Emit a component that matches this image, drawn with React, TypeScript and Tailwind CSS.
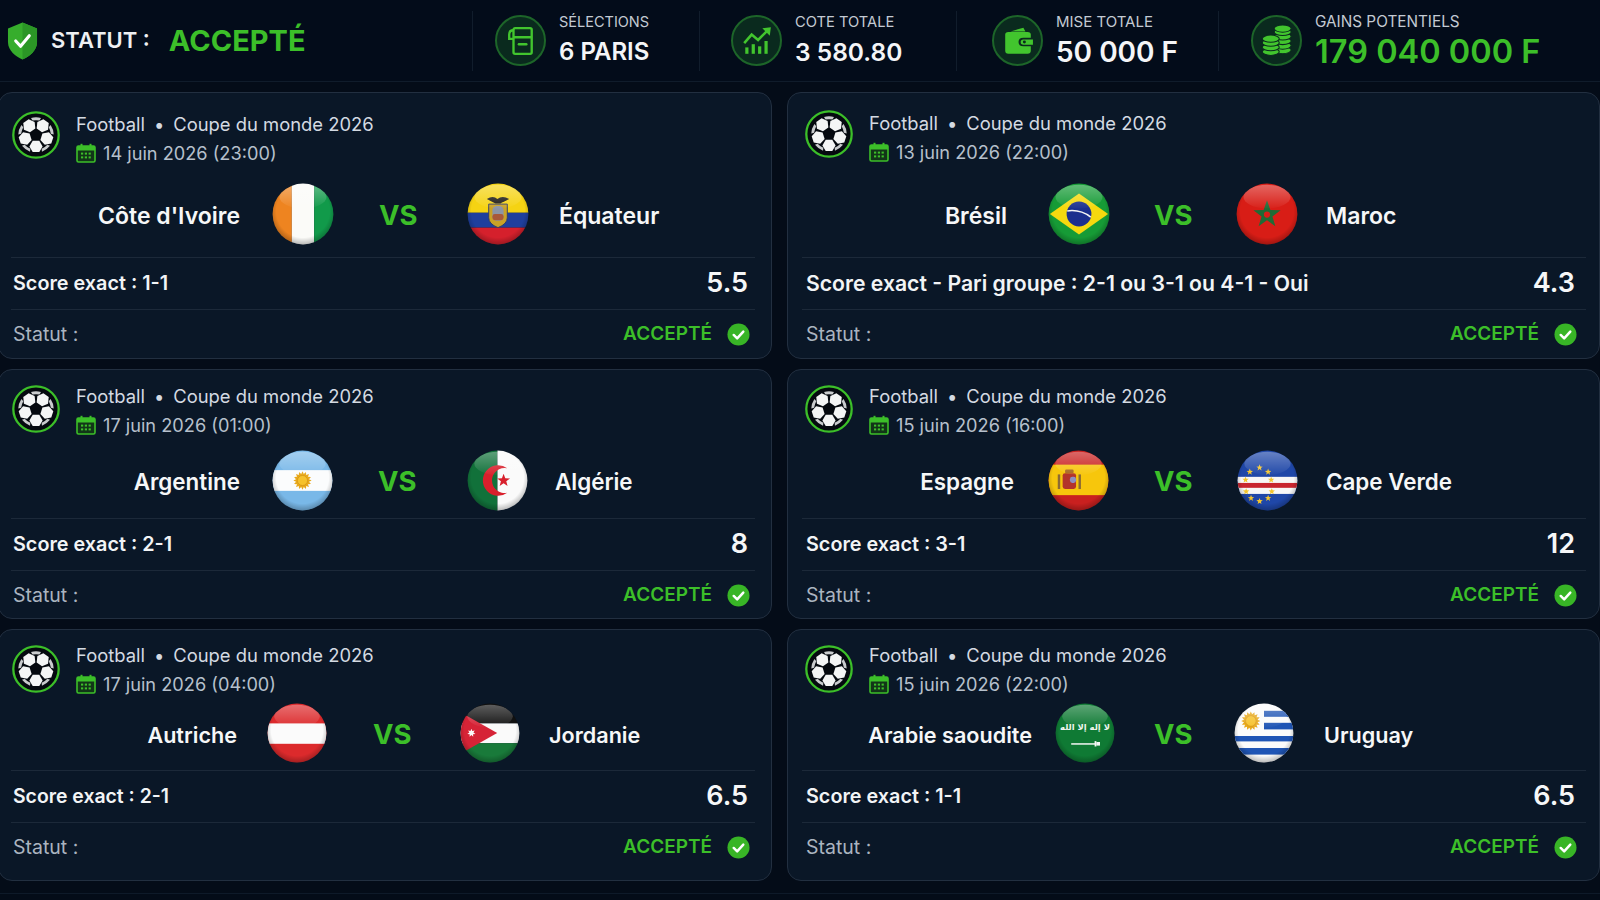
import type { ReactNode } from 'react';

type FlagCode = 'ci' | 'ec' | 'br' | 'ma' | 'ar' | 'dz' | 'es' | 'cv' | 'at' | 'jo' | 'sa' | 'uy';

interface Match {
    date: string;
    home: string;
    away: string;
    homeFlag: FlagCode;
    awayFlag: FlagCode;
    pick: string;
    pickSize: string;
    odd: string;
    nameW: string;
    gapA: string;
    gapB: string;
    gapC: string;
    gapD: string;
}

function starPoints(cx: number, cy: number, r: number, n = 5, inner = 0.42) {
    const pts: string[] = [];
    for (let i = 0; i < n * 2; i++) {
        const rad = i % 2 === 0 ? r : r * inner;
        const a = (Math.PI * i) / n - Math.PI / 2;
        pts.push(`${(cx + rad * Math.cos(a)).toFixed(2)},${(cy + rad * Math.sin(a)).toFixed(2)}`);
    }
    return pts.join(' ');
}

function hexPoints(cx: number, cy: number, r: number) {
    const pts: string[] = [];
    for (let i = 0; i < 6; i++) {
        const a = (Math.PI * i) / 3;
        pts.push(`${(cx + r * Math.cos(a)).toFixed(2)},${(cy + r * Math.sin(a)).toFixed(2)}`);
    }
    return pts.join(' ');
}

function Sun({ cx, cy, r }: { cx: number; cy: number; r: number }) {
    return (
        <g>
            <polygon points={starPoints(cx, cy, r, 16, 0.72)} fill="#e8a91c" />
            <circle cx={cx} cy={cy} r={r * 0.55} fill="#f6c22c" stroke="#c98412" strokeWidth="0.8" />
        </g>
    );
}

const capeVerdeStars: [number, number][] = [
    [21, 36], [37, 29], [51, 36], [14, 49], [56, 49],
    [15, 68], [57, 68], [23, 79], [37, 84], [51, 79],
];

const flagArt: Record<FlagCode, ReactNode> = {
    ci: (
        <>
            <rect width="32" height="100" fill="#ee8420" />
            <rect x="32" width="36" height="100" fill="#fbfbf8" />
            <rect x="68" width="32" height="100" fill="#119a4a" />
        </>
    ),
    ec: (
        <>
            <rect width="100" height="48" fill="#f5d313" />
            <rect y="48" width="100" height="24" fill="#1f3f9d" />
            <rect y="72" width="100" height="28" fill="#d5202c" />
            <path d="M32 26 Q42 19 49 26 Q57 19 68 26 Q58 31 54 33 L46 33 Q41 31 32 26 Z" fill="#1c1a16" />
            <path d="M35 34 H65 V56 Q65 66 50 72 Q35 66 35 56 Z" fill="#c9a227" stroke="#2c3a6b" strokeWidth="1.5" />
            <rect x="41" y="37" width="18" height="24" rx="7" fill="#8c95a6" />
            <rect x="41" y="50" width="18" height="10" rx="4" fill="#a8583a" />
        </>
    ),
    br: (
        <>
            <rect width="100" height="100" fill="#169b36" />
            <polygon points="50,17 97,50 50,83 3,50" fill="#f5d90f" />
            <circle cx="50" cy="50" r="20" fill="#1b2f8e" />
            <path d="M31 45 Q52 42 69 55" fill="none" stroke="#f3f3f3" strokeWidth="2.5" />
        </>
    ),
    ma: (
        <>
            <rect width="100" height="100" fill="#d81d16" />
            <polygon points={starPoints(50, 51, 23, 5, 0.4)} fill="#1f6b35" />
            <circle cx="50" cy="51" r="5" fill="#d81d16" />
        </>
    ),
    ar: (
        <>
            <rect width="100" height="100" fill="#79b8e8" />
            <rect y="33" width="100" height="34" fill="#fbfcfd" />
            <Sun cx={50} cy={50} r={15} />
        </>
    ),
    dz: (
        <>
            <rect width="50" height="100" fill="#11713a" />
            <rect x="50" width="50" height="100" fill="#fafafa" />
            <path d="M66 30 A25 25 0 1 0 66 70 A20.5 20.5 0 1 1 66 30 Z" fill="#d8202c" />
            <polygon points={starPoints(60, 50, 11, 5, 0.42)} fill="#d8202c" />
        </>
    ),
    es: (
        <>
            <rect width="100" height="100" fill="#c9201f" />
            <rect y="24" width="100" height="50" fill="#f7c60c" />
            <rect x="24" y="38" width="22" height="26" rx="4" fill="#b3342a" />
            <rect x="28" y="32" width="14" height="6" rx="2" fill="#a8671f" />
            <rect x="36" y="44" width="10" height="10" rx="4" fill="#8d8fc0" />
            <rect x="16" y="40" width="4" height="24" fill="#8c6a34" />
            <rect x="50" y="40" width="4" height="24" fill="#8c6a34" />
        </>
    ),
    cv: (
        <>
            <rect width="100" height="100" fill="#1f47a8" />
            <rect y="44" width="100" height="28" fill="#f7f7f7" />
            <rect y="54" width="100" height="8" fill="#c8252f" />
            {capeVerdeStars.map(([x, y]) => (
                <polygon key={`${x}-${y}`} points={starPoints(x, y, 5.5)} fill="#f4c52d" />
            ))}
        </>
    ),
    at: (
        <>
            <rect width="100" height="100" fill="#dc2a2c" />
            <rect y="34" width="100" height="34" fill="#fbfbfb" />
        </>
    ),
    jo: (
        <>
            <rect width="100" height="34" fill="#111111" />
            <rect y="34" width="100" height="33" fill="#fafafa" />
            <rect y="67" width="100" height="33" fill="#197a3a" />
            <polygon points="0,15 62,50 0,85" fill="#d62336" />
            <polygon points={starPoints(19, 50, 7, 7, 0.5)} fill="#fafafa" />
        </>
    ),
    sa: (
        <>
            <rect width="100" height="100" fill="#0f7a34" />
            <text x="50" y="45" textAnchor="middle" direction="rtl" fontFamily="DejaVu Sans, sans-serif" fontWeight="700" fontSize="14" fill="#eef5ee">لا إله إلا الله</text>
            <rect x="27" y="67" width="42" height="2.5" fill="#f4f7f4" />
            <rect x="66" y="63.5" width="3" height="9" fill="#f4f7f4" />
            <rect x="69" y="65" width="6" height="6" fill="#f4f7f4" />
        </>
    ),
    uy: (
        <>
            <rect width="100" height="100" fill="#fbfbfb" />
            <rect x="50" y="13" width="50" height="10" fill="#1f55b5" />
            <rect x="50" y="33" width="50" height="11" fill="#1f55b5" />
            <rect y="55" width="100" height="9" fill="#1f55b5" />
            <rect y="75" width="100" height="11" fill="#1f55b5" />
            <Sun cx={28} cy={30} r={16} />
        </>
    ),
};

function Flag({ code, size }: { code: FlagCode; size: string }) {
    return (
        <svg viewBox="0 0 100 100" className={`${size} shrink-0`}>
            <defs>
                <clipPath id={`clip-${code}`}>
                    <circle cx="50" cy="50" r="49" />
                </clipPath>
                <linearGradient id={`gloss-${code}`} x1="0" y1="0" x2="0" y2="1">
                    <stop offset="0" stopColor="#ffffff" stopOpacity="0.32" />
                    <stop offset="1" stopColor="#ffffff" stopOpacity="0.02" />
                </linearGradient>
                <radialGradient id={`shade-${code}`} cx="0.5" cy="0.45" r="0.55">
                    <stop offset="0.78" stopColor="#000000" stopOpacity="0" />
                    <stop offset="1" stopColor="#000000" stopOpacity="0.28" />
                </radialGradient>
            </defs>
            <g clipPath={`url(#clip-${code})`}>
                {flagArt[code]}
                <rect width="100" height="100" fill={`url(#shade-${code})`} />
                <ellipse cx="50" cy="22" rx="38" ry="19" fill={`url(#gloss-${code})`} />
            </g>
        </svg>
    );
}

function SoccerBall() {
    const angles = [36, 108, 180, 252, 324];
    return (
        <svg viewBox="0 0 48 48" className="h-[48px] w-[48px] shrink-0">
            <circle cx="24" cy="24" r="22.7" fill="#05090f" stroke="#3cbf29" strokeWidth="2.3" />
            {angles.map(a => (
                <g key={a} transform={`rotate(${a} 24 24)`}>
                    <polygon points={hexPoints(24, 12.6, 6.6)} fill="#f4f5f5" />
                </g>
            ))}
            {angles.map(a => (
                <g key={`edge-${a}`} transform={`rotate(${a + 36} 24 24)`}>
                    <path d="M19 7 Q24 5.6 29 7 L27.5 9.5 Q24 8.8 20.5 9.5 Z" fill="#c9cbcd" />
                </g>
            ))}
            <polygon points={starPoints(24, 24, 5.4, 5, 0.81)} fill="#05090f" />
        </svg>
    );
}

function CalendarIcon() {
    return (
        <svg viewBox="0 0 20 20" className="h-[20px] w-[20px] shrink-0">
            <rect x="1" y="3" width="18" height="16" rx="1.5" fill="#123518" stroke="#3cbf29" strokeWidth="1.6" />
            <rect x="1" y="3" width="18" height="4.5" fill="#3cbf29" />
            <rect x="4.5" y="0.8" width="2" height="4" fill="#3cbf29" />
            <rect x="13.5" y="0.8" width="2" height="4" fill="#3cbf29" />
            {[5, 8.8, 12.6].map(x => (
                <g key={x}>
                    <rect x={x} y="9.6" width="2.2" height="2" fill="#3cbf29" />
                    <rect x={x} y="13.4" width="2.2" height="2" fill="#3cbf29" />
                </g>
            ))}
        </svg>
    );
}

function CheckBadge() {
    return (
        <svg viewBox="0 0 24 24" className="h-[23px] w-[23px] shrink-0">
            <circle cx="12" cy="12" r="11.5" fill="#38b526" />
            <path d="M7 12.5 L10.6 16 L17 9" fill="none" stroke="#ffffff" strokeWidth="2.6" strokeLinecap="round" strokeLinejoin="round" />
        </svg>
    );
}

function ShieldIcon() {
    return (
        <svg viewBox="0 0 32 38" className="h-[38px] w-[31px] shrink-0">
            <path d="M16 0 L31 6 V20 C31 29 23 35 16 38 C9 35 1 29 1 20 V6 Z" fill="#36ad2c" />
            <path d="M16 0 L31 6 V20 C31 29 23 35 16 38 Z" fill="#2b9626" />
            <path d="M9 19 L14 24.5 L23 13.5" fill="none" stroke="#ffffff" strokeWidth="3.2" strokeLinecap="round" strokeLinejoin="round" />
        </svg>
    );
}

function StatCircle({ children }: { children: ReactNode }) {
    return (
        <div className="flex h-[51px] w-[51px] shrink-0 items-center justify-center rounded-full border-2 border-[#1d6529] bg-[#0a2a1e]">
            {children}
        </div>
    );
}

const statIcons: ReactNode[] = [
    <svg key="ticket" viewBox="0 0 28 28" className="h-[30px] w-[30px]" fill="none" stroke="#42c52e" strokeWidth="2.2">
        <rect x="7" y="2" width="17" height="24" rx="1.5" />
        <path d="M7 4 Q3 4 3 8 V12 H7 M7 10.5 H24" />
        <path d="M12 17 H19" strokeLinecap="round" />
    </svg>,
    <svg key="chart" viewBox="0 0 30 30" className="h-[32px] w-[32px]" fill="#42c52e">
        <rect x="4" y="21" width="3" height="6" />
        <rect x="10" y="18" width="3" height="9" />
        <rect x="16" y="20" width="3" height="7" />
        <rect x="22" y="15" width="3" height="12" />
        <path d="M3 17 L10 9 L16 14 L25 5" fill="none" stroke="#42c52e" strokeWidth="2.4" />
        <polygon points="20,3 28,2 27,10" />
    </svg>,
    <svg key="wallet" viewBox="0 0 30 30" className="h-[32px] w-[32px]" fill="#42c52e">
        <path d="M8 6 L20 2.5 L22 6 Z" />
        <path d="M3 9 Q3 6.5 6 6.5 H24 Q27 6.5 27 9 V12 H20 Q15.5 12 15.5 16 Q15.5 20 20 20 H27 V24 Q27 27 24 27 H6 Q3 27 3 24 Z" />
        <path d="M20 13.5 H29 V18.5 H20 Q17.5 18.5 17.5 16 Q17.5 13.5 20 13.5 Z" />
        <circle cx="21" cy="16" r="1.4" fill="#0a2a1e" />
    </svg>,
    <svg key="coins" viewBox="0 0 30 30" className="h-[34px] w-[34px]" fill="#42c52e" stroke="#0a2a1e" strokeWidth="0.9">
        {[23, 19, 15, 11, 7, 4].map(y => (
            <ellipse key={y} cx="20" cy={y} rx="7.5" ry="3.2" />
        ))}
        {[24.5, 20.5, 16.5, 13].map(y => (
            <ellipse key={y} cx="9.5" cy={y} rx="7.5" ry="3.2" />
        ))}
    </svg>,
];

const stats = [
    { label: 'SÉLECTIONS', value: '6 PARIS', box: 'w-[227px] pl-[22px]', labelSize: 'text-[14.5px]', valueStyle: 'text-[24px] text-[#f4f5f7]' },
    { label: 'COTE TOTALE', value: '3 580.80', box: 'w-[257px] pl-[31px]', labelSize: 'text-[14.7px]', valueStyle: 'text-[24.5px] text-[#f4f5f7]' },
    { label: 'MISE TOTALE', value: '50 000 F', box: 'w-[262px] pl-[35px]', labelSize: 'text-[15px]', valueStyle: 'text-[28px] text-[#f4f5f7]' },
    { label: 'GAINS POTENTIELS', value: '179 040 000 F', box: 'w-[382px] pl-[32px]', labelSize: 'text-[15.3px]', valueStyle: 'text-[32.5px] text-[#3cbf29]' },
];

const rows = [
    {
        card: 'h-[267px]',
        top: 'h-[82px]',
        ptLeft: 'pt-[18px]',
        ptRight: 'pt-[17px]',
        textShift: 'mt-0',
        teams: 'h-[82px] pb-[5px]',
        teamSize: 'text-[23px]',
        shift: 'mt-[5px]',
        flag: 'h-[62px] w-[62px]',
        matches: [
            { date: '14 juin 2026 (23:00)', home: "Côte d'Ivoire", away: 'Équateur', homeFlag: 'ci', awayFlag: 'ec', pick: 'Score exact : 1-1', pickSize: 'text-[19.8px]', odd: '5.5', nameW: 'w-[229px]', gapA: 'ml-[32px]', gapB: 'ml-[45px]', gapC: 'ml-[50px]', gapD: 'ml-[30px]' },
            { date: '13 juin 2026 (22:00)', home: 'Brésil', away: 'Maroc', homeFlag: 'br', awayFlag: 'ma', pick: 'Score exact - Pari groupe : 2-1 ou 3-1 ou 4-1 - Oui', pickSize: 'text-[21.2px]', odd: '4.3', nameW: 'w-[205px]', gapA: 'ml-[41px]', gapB: 'ml-[44px]', gapC: 'ml-[44px]', gapD: 'ml-[28px]' },
        ] as Match[],
    },
    {
        card: 'h-[250px]',
        top: 'h-[72px]',
        ptLeft: 'pt-[15px]',
        ptRight: 'pt-[15px]',
        textShift: '-mt-[2px]',
        teams: 'h-[76px]',
        teamSize: 'text-[22.4px]',
        shift: 'mt-[4px]',
        flag: 'h-[61px] w-[61px]',
        matches: [
            { date: '17 juin 2026 (01:00)', home: 'Argentine', away: 'Algérie', homeFlag: 'ar', awayFlag: 'dz', pick: 'Score exact : 2-1', pickSize: 'text-[19.8px]', odd: '8', nameW: 'w-[229px]', gapA: 'ml-[32px]', gapB: 'ml-[45px]', gapC: 'ml-[51px]', gapD: 'ml-[27px]' },
            { date: '15 juin 2026 (16:00)', home: 'Espagne', away: 'Cape Verde', homeFlag: 'es', awayFlag: 'cv', pick: 'Score exact : 3-1', pickSize: 'text-[19.8px]', odd: '12', nameW: 'w-[212px]', gapA: 'ml-[34px]', gapB: 'ml-[45px]', gapC: 'ml-[45px]', gapD: 'ml-[28px]' },
        ] as Match[],
    },
    {
        card: 'h-[252px]',
        top: 'h-[66px]',
        ptLeft: 'pt-[15px]',
        ptRight: 'pt-[15px]',
        textShift: '-mt-[3px]',
        teams: 'h-[74px]',
        teamSize: 'text-[21.6px]',
        shift: 'mt-[4px]',
        flag: 'h-[60px] w-[60px]',
        matches: [
            { date: '17 juin 2026 (04:00)', home: 'Autriche', away: 'Jordanie', homeFlag: 'at', awayFlag: 'jo', pick: 'Score exact : 2-1', pickSize: 'text-[19.4px]', odd: '6.5', nameW: 'w-[226px]', gapA: 'ml-[30px]', gapB: 'ml-[46px]', gapC: 'ml-[49px]', gapD: 'ml-[29px]' },
            { date: '15 juin 2026 (22:00)', home: 'Arabie saoudite', away: 'Uruguay', homeFlag: 'sa', awayFlag: 'uy', pick: 'Score exact : 1-1', pickSize: 'text-[19.8px]', odd: '6.5', nameW: 'w-[230px]', gapA: 'ml-[23px]', gapB: 'ml-[39px]', gapC: 'ml-[42px]', gapD: 'ml-[30px]' },
        ] as Match[],
    },
];

function MatchCard({ match, row, side }: { match: Match; row: (typeof rows)[number]; side: 'left' | 'right' }) {
    const left = side === 'left';
    return (
        <div className={`${row.card} rounded-[14px] border border-[#222f40] bg-[#0a1727] ${left ? '-ml-[2px] pl-[12px] pr-[16px]' : 'pl-[14px] pr-[13px]'}`}>
            {/* Competition + date */}
            <div className={`${row.top} flex ${left ? `${row.ptLeft} gap-[16px] pl-[1px]` : `${row.ptRight} gap-[16px] pl-[3px]`}`}>
                <SoccerBall />
                <div className={`${row.textShift} text-[#d4dae2]`}>
                    <div className="text-[18.4px] leading-[26px]">
                        Football<span className="mx-[9px]">•</span>Coupe du monde 2026
                    </div>
                    <div className="mt-[3px] flex items-center gap-[7px] text-[18.2px] leading-[26px] text-[#b6c0cc]">
                        <CalendarIcon />
                        {match.date}
                    </div>
                </div>
            </div>

            {/* Teams */}
            <div className={`${row.teams} ${row.teamSize} flex items-center font-semibold text-[#f6f7f8]`}>
                <div className={`${match.nameW} ${row.shift} shrink-0 text-right`}>{match.home}</div>
                <div className={match.gapA}>
                    <Flag code={match.homeFlag} size={row.flag} />
                </div>
                <div className={`${match.gapB} ${row.shift} w-[38px] shrink-0 text-center text-[27.5px] font-bold text-[#3cbf29]`}>VS</div>
                <div className={match.gapC}>
                    <Flag code={match.awayFlag} size={row.flag} />
                </div>
                <div className={`${match.gapD} ${row.shift}`}>{match.away}</div>
            </div>

            {/* Pick */}
            <div className={`flex h-[52px] items-center justify-between border-t border-[#1c2939] ${left ? 'pl-[2px] pr-[7px]' : 'pl-[4px] pr-[11px]'}`}>
                <span className={`${match.pickSize} font-semibold text-[#f2f4f6]`}>{match.pick}</span>
                <span className="text-[27px] font-semibold text-[#f6f7f8]">{match.odd}</span>
            </div>

            {/* Status */}
            <div className={`flex h-[50px] items-center justify-between border-t border-[#1c2939] ${left ? 'pl-[2px] pr-[5px]' : 'pl-[4px] pr-[9px]'}`}>
                <span className="text-[19.5px] text-[#aab4c0]">Statut :</span>
                <span className="flex items-center gap-[15px] text-[19px] font-semibold text-[#3cbf29]">
                    ACCEPTÉ
                    <CheckBadge />
                </span>
            </div>
        </div>
    );
}

export default function App() {
    return (
        <div className="h-[900px] w-[1600px] overflow-hidden bg-[#040c18] [font-family:Inter,sans-serif]">
            {/* Top summary bar */}
            <div className="flex h-[82px] items-center border-b border-[#101c2b] bg-[#030c1a]">
                <div className="flex w-[472px] shrink-0 items-center pl-[7px]">
                    <ShieldIcon />
                    <span className="ml-[13px] text-[22px] font-semibold text-[#eef0f3]">STATUT :</span>
                    <span className="ml-[19px] text-[29px] font-bold text-[#3cbf29]">ACCEPTÉ</span>
                </div>
                {stats.map((s, i) => (
                    <div key={s.label} className={`${s.box} flex h-[60px] shrink-0 items-center gap-[13px] border-l border-[#111d2c]`}>
                        <StatCircle>{statIcons[i]}</StatCircle>
                        <div>
                            <div className={`${s.labelSize} leading-[20px] text-[#c3cad3]`}>{s.label}</div>
                            <div className={`${s.valueStyle} mt-[3px] leading-[34px] font-semibold`}>{s.value}</div>
                        </div>
                    </div>
                ))}
            </div>

            {/* Bet cards */}
            <div className="mt-[10px] grid grid-cols-[772px_813px] gap-x-[15px] gap-y-[10px]">
                {rows.map(row =>
                    row.matches.map((m, i) => (
                        <MatchCard key={m.home} match={m} row={row} side={i === 0 ? 'left' : 'right'} />
                    ))
                )}
            </div>
            <div className="mt-[12px] border-t border-[#0e1a29]" />
        </div>
    );
}
